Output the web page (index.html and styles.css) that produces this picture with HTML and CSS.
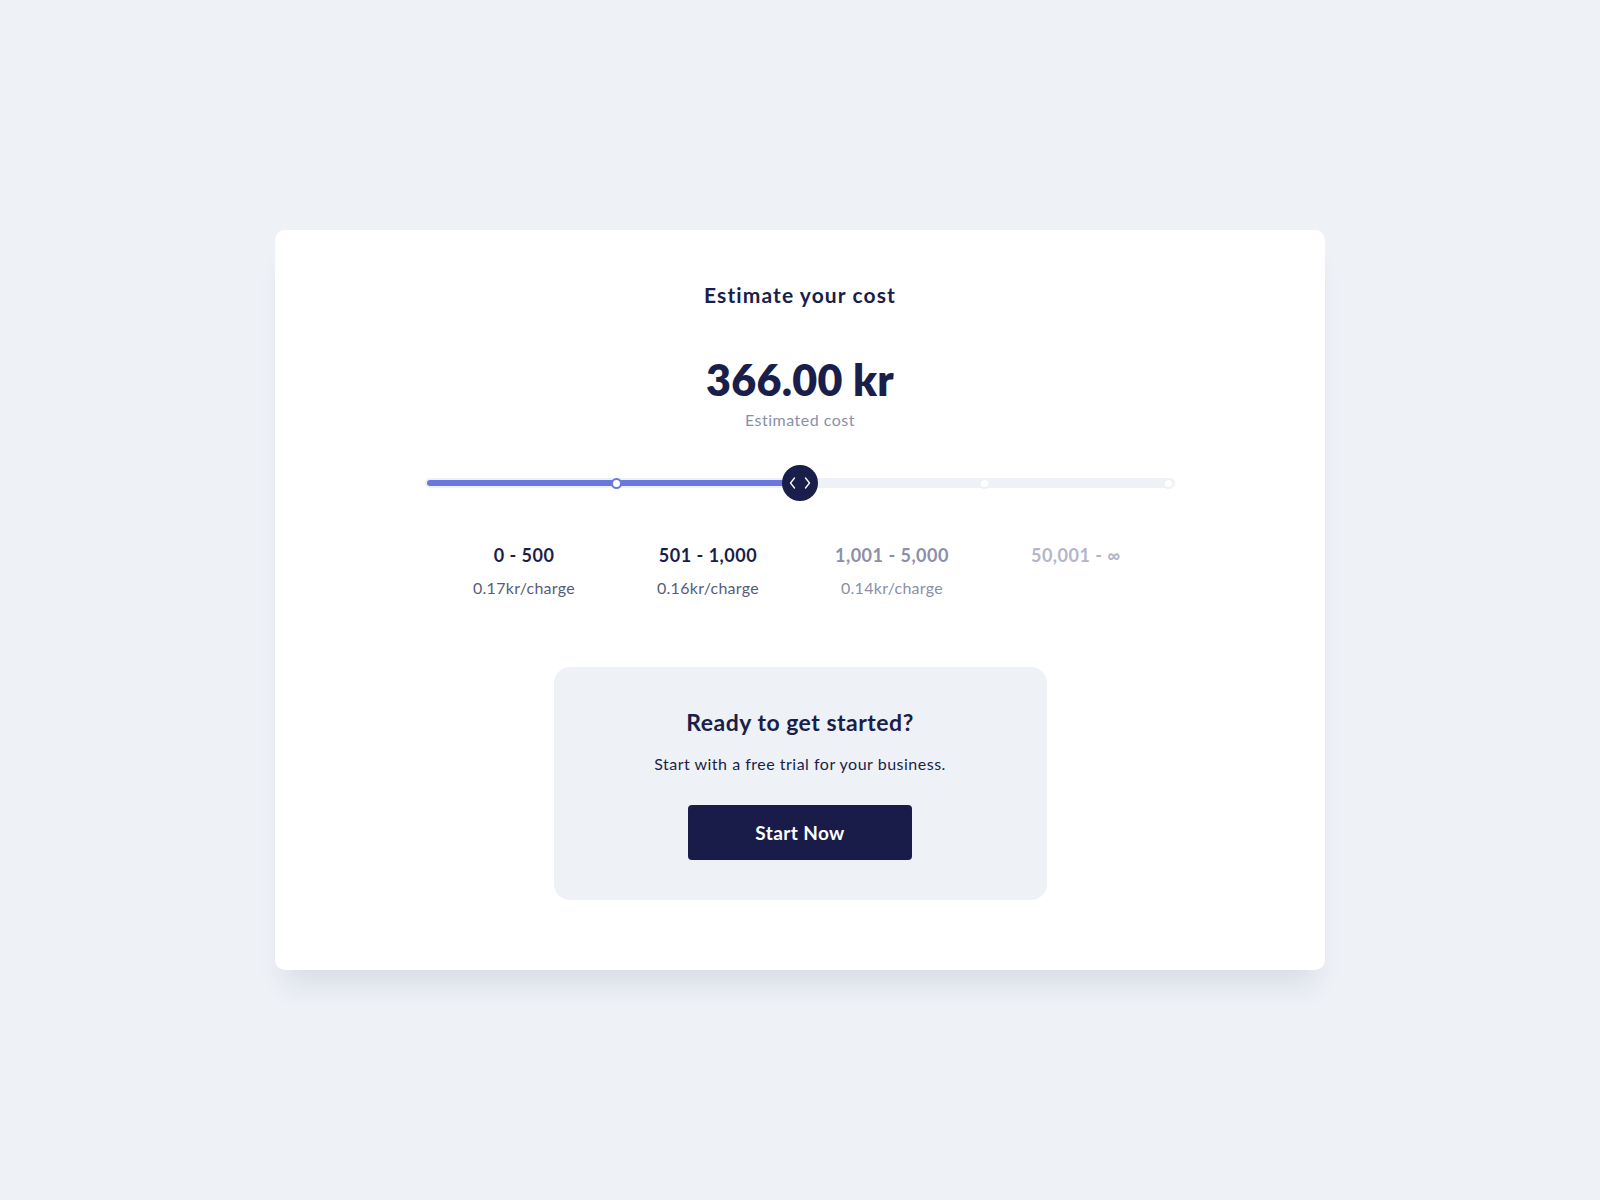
FILE: index.html
```html
<!DOCTYPE html>
<html lang="en">
<head>
    <meta charset="UTF-8">
    <meta name="viewport" content="width=device-width, initial-scale=1.0">
    <title>Estimate your cost</title>
    <link rel="stylesheet" href="styles.css">
</head>
<body>

    <div class="pricing-card">
        <h2 class="pricing-title">Estimate your cost</h2>

        <div class="estimate">
            <div class="estimate-amount">366.00 kr</div>
            <div class="estimate-label">Estimated cost</div>
        </div>

        <div class="slider">
            <div class="slider-track">
                <div class="slider-fill" style="width: 50%;"></div>
            </div>
            <div class="slider-steps">
                <span class="slider-dot dot-hidden" style="left: 0%;"></span>
                <span class="slider-dot dot-active" style="left: 25%;"></span>
                <span class="slider-dot" style="left: 75%;"></span>
                <span class="slider-dot" style="left: 100%;"></span>
                <button class="slider-knob" style="left: 50%;" aria-label="Drag to change volume">
                    <svg width="22" height="12" viewBox="0 0 22 12" fill="none" stroke="#fff" stroke-width="1.3" stroke-linecap="round" stroke-linejoin="round">
                        <path d="M5.5 1 L1.5 6 L5.5 11"/>
                        <path d="M16.5 1 L20.5 6 L16.5 11"/>
                    </svg>
                </button>
            </div>
        </div>

        <div class="tiers">
            <div class="tier">
                <div class="tier-range">0 - 500</div>
                <div class="tier-price">0.17kr/charge</div>
            </div>
            <div class="tier">
                <div class="tier-range">501 - 1,000</div>
                <div class="tier-price">0.16kr/charge</div>
            </div>
            <div class="tier tier-next">
                <div class="tier-range">1,001 - 5,000</div>
                <div class="tier-price">0.14kr/charge</div>
            </div>
            <div class="tier tier-far">
                <div class="tier-range">50,001 - ∞</div>
            </div>
        </div>

        <div class="cta-box">
            <h3>Ready to get started?</h3>
            <p>Start with a free trial for your business.</p>
            <button class="cta-button">Start Now</button>
        </div>
    </div>

</body>
</html>
```

FILE: styles.css
```css
body {
    background-color: #EEF1F6;
    color: #1A1E4A;
    font-family: Lato, 'Open Sans', sans-serif;
    margin: 0;
    padding: 0;
    display: flex;
    justify-content: center;
    align-items: center;
    min-height: 100vh;
}
.pricing-card {
    width: 1050px;
    box-sizing: border-box;
    background-color: #FFFFFF;
    border-radius: 10px;
    padding: 50px 0 70px;
    box-shadow: 0 25px 25px -10px rgba(40, 60, 110, 0.10);
    text-align: center;
}
.pricing-title {
    margin: 0;
    font-size: 21px;
    line-height: 30px;
    font-weight: 700;
    letter-spacing: 1.1px;
}
.estimate {
    margin-top: 45px;
}
.estimate-amount {
    font-size: 43px;
    line-height: 50px;
    font-weight: 800;
    letter-spacing: 0.3px;
}
.estimate-label {
    margin-top: 4px;
    font-size: 16px;
    line-height: 22px;
    letter-spacing: 0.5px;
    color: #8A8FA9;
}

/* slider */
.slider {
    position: relative;
    width: 750px;
    height: 36px;
    margin: 34px auto 0;
}
.slider-track {
    position: absolute;
    left: 0;
    right: 0;
    top: 13px;
    height: 10px;
    border-radius: 5px;
    background-color: #EEF1F6;
}
.slider-fill {
    height: 6px;
    margin: 2px 0 0 2px;
    border-radius: 3px;
    background-color: #6B77E0;
}
.slider-steps {
    position: absolute;
    left: 7px;
    right: 7px;
    top: 0;
    bottom: 0;
}
.slider-dot {
    position: absolute;
    top: 18px;
    width: 7px;
    height: 7px;
    margin: -5.5px 0 0 -5.5px;
    border-radius: 50%;
    border: 2px solid #EEF1F6;
    background-color: #FFFFFF;
}
.slider-dot.dot-active {
    border-color: #6B77E0;
}
.slider-dot.dot-hidden {
    display: none;
}
.slider-knob {
    position: absolute;
    top: 0;
    width: 36px;
    height: 36px;
    margin-left: -18px;
    padding: 0;
    border: none;
    border-radius: 50%;
    background-color: #1A1E4A;
    display: flex;
    justify-content: center;
    align-items: center;
    cursor: grab;
}

/* tiers under the slider */
.tiers {
    display: grid;
    grid-template-columns: repeat(4, 1fr);
    width: 736px;
    margin: 42px auto 0;
}
.tier-range {
    font-size: 18px;
    line-height: 24px;
    font-weight: 700;
    letter-spacing: 0.5px;
    color: #1A1E4A;
}
.tier-price {
    margin-top: 10px;
    font-size: 16px;
    line-height: 22px;
    letter-spacing: 0.3px;
    color: #575C7E;
}
.tier-next .tier-range,
.tier-next .tier-price {
    color: #8B8FA8;
}
.tier-far .tier-range {
    color: #B3B6C6;
}

/* call to action */
.cta-box {
    width: 493px;
    box-sizing: border-box;
    margin: 68px auto 0;
    padding: 40px 20px 40px;
    border-radius: 16px;
    background-color: #EEF1F6;
}
.cta-box h3 {
    margin: 0;
    font-size: 23px;
    line-height: 30px;
    font-weight: 700;
    letter-spacing: 0.5px;
}
.cta-box p {
    margin: 16px 0 0;
    font-size: 16px;
    line-height: 22px;
    letter-spacing: 0.5px;
    color: #1A1E4A;
}
.cta-button {
    margin-top: 30px;
    width: 224px;
    height: 55px;
    border: none;
    border-radius: 4px;
    background-color: #191C48;
    color: #FFFFFF;
    font-family: inherit;
    font-size: 19px;
    font-weight: 700;
    letter-spacing: 0.4px;
    cursor: pointer;
}
.cta-button:hover {
    background-color: #262A5E;
}
```
